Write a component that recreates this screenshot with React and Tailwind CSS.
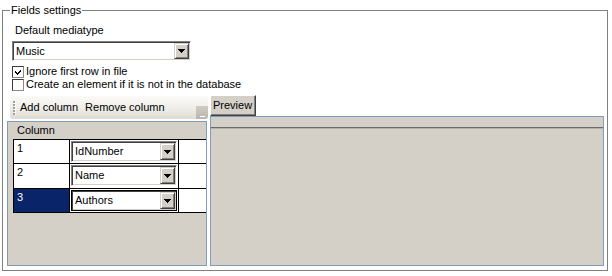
import React from "react";

const Arrow = () => (
  <svg width="7" height="4" viewBox="0 0 7 4" shapeRendering="crispEdges">
    <path d="M0 0h7v1h-1v1h-1v1h-1v1h-1v-1h-1v-1h-1v-1h-1z" fill="#000" />
  </svg>
);

const DropButton = ({ width = "w-[15px]" }) => (
  <div
    className={`flex h-full ${width} shrink-0 items-center justify-center border border-t-[#d4d0c8] border-l-[#d4d0c8] border-r-[#404040] border-b-[#404040] bg-[#d4d0c8] shadow-[inset_1px_1px_0_#fff,inset_-1px_-1px_0_#808080]`}
  >
    <Arrow />
  </div>
);

const ComboBox = ({ value, size, focused }) => {
  const frame = focused
    ? "border-[#000]"
    : "border-t-[#808080] border-l-[#808080] border-r-white border-b-white";
  return (
    <div
      className={`flex ${size} border ${frame} bg-white p-[1px] shadow-[inset_1px_1px_0_#404040,inset_-1px_-1px_0_#d4d0c8]`}
    >
      <div className="flex flex-1 items-center pl-[2px] leading-[13px]">{value}</div>
      <DropButton />
    </div>
  );
};

const CheckBox = ({ checked, label }) => (
  <div className="flex h-[13px] items-center">
    <div className="flex h-[12px] w-[12px] items-center justify-center border border-t-[#3c3c3c] border-l-[#3c3c3c] border-r-[#8a8a8a] border-b-[#8a8a8a] bg-white">
      {checked && (
        <svg width="8" height="8" viewBox="0 0 8 8" shapeRendering="crispEdges">
          <path d="M1 3v2l2 2 4-4V1L3 5z" fill="#000" />
        </svg>
      )}
    </div>
    <span className="ml-[2px] leading-[13px]">{label}</span>
  </div>
);

const GridRow = ({ num, field, height, selected, last }) => (
  <div className={`flex ${height} border-t border-black ${last ? "border-b" : ""}`}>
    <div
      className={`w-[56px] shrink-0 border-l border-black pl-[3px] pt-[2px] leading-[13px] ${
        selected ? "bg-[#0a246a] text-white" : "bg-white"
      }`}
    >
      {num}
    </div>
    <div className="w-[109px] shrink-0 border-l border-black bg-white pl-[1px] pt-[1px]">
      <ComboBox value={field} size="h-[21px] w-[106px]" focused={selected} />
    </div>
    <div className="flex-1 border-l border-black bg-white" />
  </div>
);

const Grip = () => (
  <svg width="3" height="14" viewBox="0 0 3 14" shapeRendering="crispEdges">
    {[0, 3, 6, 9, 12].map((y) => (
      <g key={y}>
        <rect x="1" y={y + 1} width="2" height="2" fill="#fff" />
        <rect x="0" y={y} width="2" height="2" fill="#a19f97" />
      </g>
    ))}
  </svg>
);

export default function App() {
  return (
    <div className="h-[276px] w-[612px] overflow-hidden bg-white pt-[10px] pl-[2px] font-['Liberation_Sans',Arial,sans-serif] text-[11px] text-black">
      <div className="relative h-[261px] w-[606px] border border-[#808080]">
        <span className="absolute left-[7px] top-[-8px] bg-white px-[1px] leading-[14px]">
          Fields settings
        </span>

        <div className="flex flex-col">
          <div className="ml-[12px] mt-[13px] leading-[13px]">Default mediatype</div>
          <div className="ml-[9px] mt-[4px]">
            <ComboBox value="Music" size="h-[20px] w-[179px]" />
          </div>
          <div className="ml-[9px] mt-[4px] flex flex-col">
            <CheckBox checked label="Ignore first row in file" />
            <CheckBox label="Create an element if it is not in the database" />
          </div>

          <div className="ml-[4px] mt-[4px] flex">
            <div className="flex w-[201px] flex-col">
              <div className="ml-[3px] mt-[1px] flex h-[23px] w-[198px] items-center rounded-[3px] bg-gradient-to-b from-[#fbfaf8] via-[#efeee9] to-[#dedcd4]">
                <div className="ml-[3px]">
                  <Grip />
                </div>
                <span className="ml-[4px] leading-[13px]">Add column</span>
                <span className="ml-[7px] leading-[13px]">Remove column</span>
                <div className="ml-auto flex h-[13px] w-[12px] items-end justify-center self-end rounded-br-[3px] bg-gradient-to-b from-[#cfccc4] to-[#b9b6ad] pb-[2px]">
                  <div className="h-[1px] w-[5px] bg-white" />
                </div>
              </div>

              <div className="mt-[2px] flex h-[145px] w-[200px] flex-col border border-[#7f9db9] bg-[#d4d0c8]">
                <div className="h-[17px] pl-[9px] pt-[2px] leading-[13px]">Column</div>
                <div className="ml-[5px]">
                  <GridRow num="1" field="IdNumber" height="h-[24px]" />
                  <GridRow num="2" field="Name" height="h-[25px]" />
                  <GridRow num="3" field="Authors" height="h-[25px]" selected last />
                </div>
              </div>
            </div>

            <div className="ml-[2px] flex w-[394px] flex-col">
              <div className="flex h-[21px] w-[46px] items-center border border-t-[#fff] border-l-[#fff] border-r-[#404040] border-b-[#404040] bg-[#d4d0c8] pl-[2px] leading-[13px] shadow-[inset_-1px_-1px_0_#808080]">
                Preview
              </div>
              <div className="flex h-[150px] w-[394px] flex-col border border-[#7f9db9] bg-[#d4d0c8]">
                <div className="h-[10px]" />
                <div className="h-[1px] bg-[#6a6a6a]" />
                <div className="h-[1px] bg-[#b5b2a9]" />
              </div>
            </div>
          </div>
        </div>
      </div>
    </div>
  );
}
